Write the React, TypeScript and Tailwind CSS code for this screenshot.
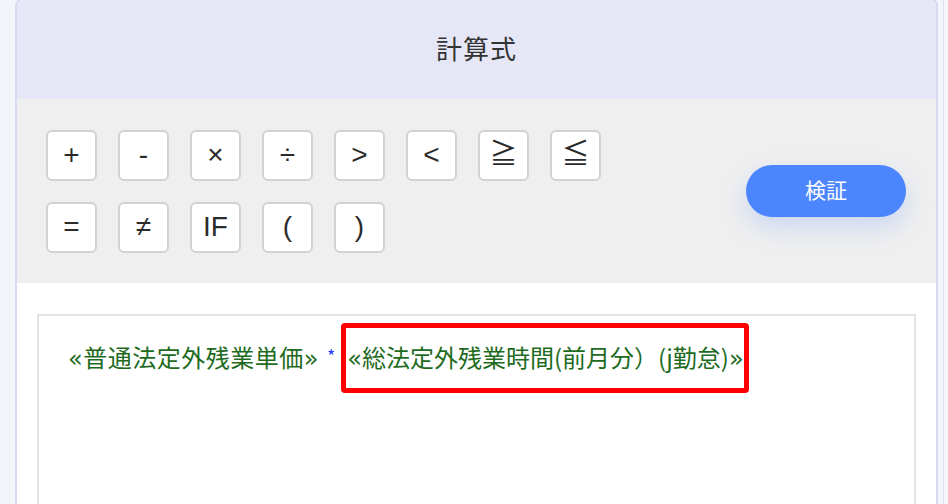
import React from "react";

const ops1 = ["+", "-", "×", "÷", ">", "<", "≧", "≦"];
const ops2 = ["=", "≠", "IF", "(", ")"];

function OpButton({ label }: { label: string }) {
  return (
    <button className="w-[51px] h-[51px] bg-white border-2 border-[#d2d2d2] rounded-[6px] flex items-center justify-center text-[28px] text-[#2b2b2b] leading-none">
      {label}
    </button>
  );
}

function Q({ c }: { c: string }) {
  return <span style={{ fontFamily: '"DejaVu Sans", sans-serif' }}>{c}</span>;
}

export default function App() {
  return (
    <div
      className="w-[948px] h-[504px] overflow-hidden bg-[#f4f5fb] flex"
      style={{ fontFamily: '"Liberation Sans", "Noto Sans CJK JP", sans-serif' }}
    >
      <div className="w-[15px] shrink-0" />
      <div className="w-[923px] shrink-0 -mt-[2px] border-2 border-b-0 border-[#d7daf0] rounded-t-[8px] overflow-hidden flex flex-col bg-white">
        <div className="h-[99px] shrink-0 bg-[#e6e7f6] flex items-center justify-center pt-[2px]">
          <span className="text-[26px] text-[#333] tracking-[1px]">計算式</span>
        </div>
        <div className="h-[184px] shrink-0 bg-[#efefef] flex items-center justify-between pl-[29px] pr-[30px]">
          <div className="flex flex-col gap-[21px]">
            <div className="flex gap-[21px]">
              {ops1.map((o) => (
                <OpButton key={o} label={o} />
              ))}
            </div>
            <div className="flex gap-[21px]">
              {ops2.map((o) => (
                <OpButton key={o} label={o} />
              ))}
            </div>
          </div>
          <button className="w-[160px] h-[52px] rounded-full bg-[#4c86ff] text-white text-[21px] shadow-[0_10px_24px_rgba(76,134,255,0.22)]">
            検証
          </button>
        </div>
        <div className="flex-1 bg-white pt-[31px] px-[20px]">
          <div className="h-[260px] border-2 border-b-0 border-[#e3e3e3] pl-[29px] pt-[7px]">
            <div
              className="flex items-center text-[#1e6b1e] text-[24px] leading-none"
              style={{ fontFamily: '"Noto Sans CJK JP", sans-serif' }}
            >
              <span className="tracking-[0.5px]">
                <Q c="«" />普通法定外残業単価<Q c="»" />
              </span>
              <span className="text-[#1f3cff] text-[18px] ml-[8px] mr-[6px] -mt-[6px]">*</span>
              <span className="inline-block border-[5px] border-[#ff0000] rounded-[4px] py-[17px] pl-[1px] pr-[0px]">
                <Q c="«" />総法定外残業時間(前月分）(j勤怠)<Q c="»" />
              </span>
            </div>
          </div>
        </div>
      </div>
      <div className="w-[10px] shrink-0 flex justify-end">
        <div className="w-[1px] h-full bg-[#dfe1ee] mr-[4px]" />
      </div>
    </div>
  );
}
